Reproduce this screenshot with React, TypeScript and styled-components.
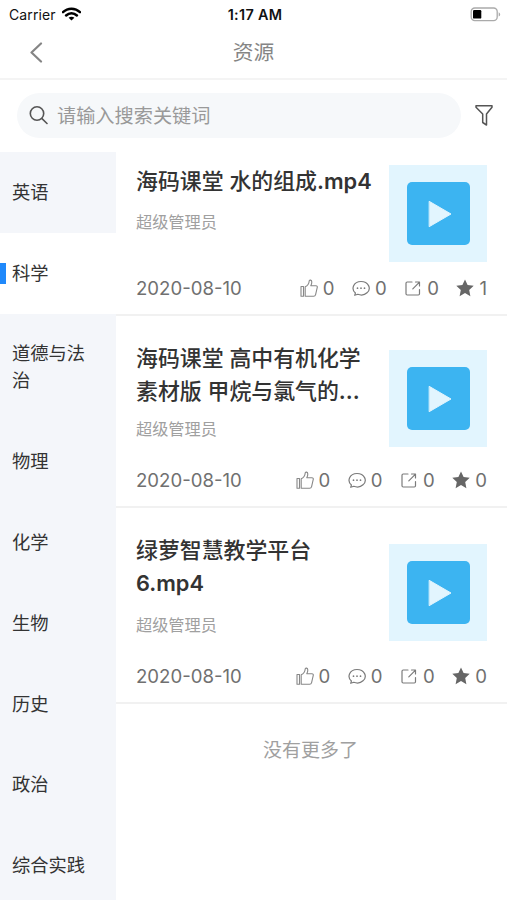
import React from 'react';
import styled, { createGlobalStyle } from 'styled-components';

const GlobalStyle = createGlobalStyle`
  * { box-sizing: border-box; }
  body {
    margin: 0;
    background: #fff;
    font-family: Inter, "Noto Sans CJK SC", sans-serif;
    color: #333;
  }
`;

const Screen = styled.div`
  width: 507px;
  height: 900px;
  display: flex;
  flex-direction: column;
  overflow: hidden;
  background: #fff;
`;

const StatusBar = styled.div`
  height: 27px;
  flex: none;
  display: grid;
  grid-template-columns: 1fr auto 1fr;
  align-items: center;
  padding: 0 6px 0 9px;
  font-size: 14px;
  line-height: 27px;
  color: #111;
`;

const Carrier = styled.div`
  display: flex;
  align-items: center;
  gap: 6px;
  letter-spacing: 0.1px;
`;

const Clock = styled.div`
  font-weight: 600;
  font-size: 14.4px;
  letter-spacing: 0.3px;
  padding-top: 1px;
`;

const BatterySlot = styled.div`
  display: flex;
  justify-content: flex-end;
`;

const NavBar = styled.header`
  height: 53px;
  flex: none;
  display: grid;
  grid-template-columns: 60px 1fr 60px;
  align-items: center;
  border-bottom: 2px solid #f4f4f4;
`;

const BackButton = styled.div`
  display: flex;
  padding-left: 29px;
`;

const PageTitle = styled.div`
  text-align: center;
  font-size: 20.7px;
  line-height: 30px;
  padding-top: 1px;
  color: #858585;
`;

const SearchRow = styled.div`
  height: 72px;
  flex: none;
  display: flex;
  align-items: center;
  padding: 0 14px 2px 17px;
  gap: 14px;
`;

const SearchField = styled.div`
  width: 444px;
  height: 45px;
  border-radius: 23px;
  background: #f6f8fa;
  display: flex;
  align-items: center;
  gap: 9px;
  padding-left: 12px;
  font-size: 19.2px;
  color: #999;
`;

const Body = styled.div`
  flex: 1;
  min-height: 0;
  display: flex;
`;

const Sidebar = styled.nav`
  width: 116px;
  flex: none;
  background: #f4f6fa;
`;

const Subject = styled.div<{ $active?: boolean }>`
  display: flex;
  align-items: center;
  padding: 26.9px 0;
  background: ${(p) => (p.$active ? '#fff' : 'transparent')};
  font-size: 18.3px;
  line-height: 27px;
`;

const Marker = styled.span<{ $active?: boolean }>`
  width: 6px;
  height: 21px;
  margin-right: 6px;
  flex: none;
  background: ${(p) => (p.$active ? '#2089fb' : 'transparent')};
`;

const SubjectName = styled.span`
  width: 76px;
`;

const List = styled.main`
  flex: 1;
  min-width: 0;
`;

const Card = styled.article<{ $height: number }>`
  height: ${(p) => p.$height}px;
  display: flex;
  flex-direction: column;
  justify-content: space-between;
  padding: 0 20px 12px;
  border-bottom: 2px solid #f1f1f1;
`;

const CardTop = styled.div`
  display: flex;
  justify-content: space-between;
`;

const CardText = styled.div<{ $top: number }>`
  padding-top: ${(p) => p.$top}px;
`;

const CardTitle = styled.h2`
  margin: 0;
  font-size: 21.9px;
  line-height: 33px;
  font-weight: 500;
  white-space: nowrap;
`;

const Latin = styled.span`
  font-weight: 600;
  font-size: 21.8px;
`;

const Author = styled.div<{ $gap: number }>`
  margin-top: ${(p) => p.$gap}px;
  font-size: 16.2px;
  line-height: 24px;
  color: #a0a0a0;
`;

const Thumb = styled.div<{ $top: number }>`
  width: 98px;
  height: 97px;
  flex: none;
  margin-top: ${(p) => p.$top}px;
  background: #e2f5fe;
  display: flex;
  align-items: center;
  justify-content: center;
`;

const ThumbTile = styled.div`
  width: 63px;
  height: 63px;
  border-radius: 5px;
  background: #3cb4f1;
  display: flex;
  align-items: center;
  justify-content: center;
  padding-left: 4px;
`;

const Meta = styled.div`
  display: flex;
  justify-content: space-between;
  align-items: center;
  height: 28px;
  font-size: 18.6px;
  color: #707070;
`;

const PostedOn = styled.span`
  font-size: 18.6px;
`;

const Stats = styled.div`
  display: flex;
  gap: 17.5px;
`;

const Stat = styled.span`
  display: flex;
  align-items: center;
  gap: 5px;
`;

const EndNote = styled.div`
  margin-top: 32px;
  padding-right: 2px;
  text-align: center;
  font-size: 19px;
  line-height: 30px;
  color: #a0a0a0;
`;

const Svg = styled.svg`
  display: block;
  flex: none;
  fill: none;
  stroke-linecap: round;
  stroke-linejoin: round;
`;

const WifiIcon = () => (
  <Svg width="19" height="14" viewBox="0 0 19 14">
    <path
      d="M1 5.2C5.8.5 13.2.5 18 5.2M4.1 8.5c3.1-3 7.7-3 10.8 0"
      stroke="#000"
      strokeWidth="2.5"
    />
    <path d="M9.5 13.6 6.6 10.8c1.600-1.500 4.200-1.500 5.800 0Z" fill="#000" />
  </Svg>
);

const BatteryIcon = () => (
  <Svg width="31" height="15" viewBox="0 0 31 15">
    <rect x="1.2" y="1" width="26" height="12.6" rx="3.6" stroke="#aaa" strokeWidth="1.3" />
    <rect x="3" y="3" width="8.3" height="8.6" rx="1.2" fill="#000" />
    <path d="M28.7 5.2c2 .8 2 3.6 0 4.4Z" fill="#aaa" />
  </Svg>
);

const BackIcon = () => (
  <Svg width="14" height="22" viewBox="0 0 14 22" stroke="#858585" strokeWidth="2.2">
    <path d="M12 1.500 2.500 10.500 12 19.500" />
  </Svg>
);

const SearchIcon = () => (
  <Svg width="19" height="20" viewBox="0 0 19 20" stroke="#555" strokeWidth="1.6">
    <circle cx="8" cy="8.500" r="6.700" />
    <path d="m13 13.700 5 4.800" />
  </Svg>
);

const FilterIcon = () => (
  <Svg width="18" height="22" viewBox="0 0 18 22" stroke="#555" strokeWidth="1.5">
    <path d="M1 1.800h16v1.400l-5.500 6.800v11L7.700 18.500V10L1 3.200Z" />
  </Svg>
);

const LikeIcon = () => (
  <Svg width="18" height="19" viewBox="0 0 18 19" stroke="#888" strokeWidth="1.1">
    <path d="M1 7.500h2.500v9.800H1ZM5.200 7.700c2.600-1 3.800-3 4-5.700.2-1.500 2.600-1.100 2.600 1 0 1.500-.4 2.500-1 3.700h5c1.400 0 1.700.8 1.400 2l-1.600 7c-.3 1.200-.9 1.600-2 1.600H5.200Z" />
  </Svg>
);

const CommentIcon = () => (
  <Svg width="18" height="17" viewBox="0 0 18 17" stroke="#7b7b7b" strokeWidth="1.2">
    <path d="M3.400 13C-1.300 9 1.500 1.500 9 1.500s10.700 7.200 6 11.300c-2.300 2.200-6 2.700-9.200 1.500l-3.100 1Z" />
    <path d="M5.500 8.200h.01M9 8.200h.01M12.500 8.200h.01" strokeWidth="1.700" />
  </Svg>
);

const ShareIcon = () => (
  <Svg width="18" height="17" viewBox="0 0 18 17" stroke="#7b7b7b" strokeWidth="1.2">
    <path d="M8 2H3.200Q2 2 2 3.200v10.600Q2 15 3.200 15h11.100Q15.500 15 15.500 13.800V9.500M8.800 8.800 15 2.600M11.500 2h4v4" />
  </Svg>
);

const StarIcon = () => (
  <Svg width="18" height="18" viewBox="0 0 18 18">
    <path d="m9 .5 2.600 5.500 6.100.8-4.500 4.200 1.200 6.200L9 14.100l-5.400 3.100 1.200-6.200L.3 6.800 6.400 6Z" fill="#666" />
  </Svg>
);

const PlayIcon = () => (
  <Svg width="24" height="28" viewBox="0 0 24 28">
    <path d="M1.500 1.500 23 14 1.500 26.500Z" fill="#e2f5fe" stroke="#e2f5fe" />
  </Svg>
);

const subjects = ['英语', '科学', '道德与法治', '物理', '化学', '生物', '历史', '政治', '综合实践'];

interface Resource {
  title: React.ReactNode;
  stars: number;
  height: number;
  textTop: number;
  thumbTop: number;
  authorGap: number;
}

const resources: Resource[] = [
  {
    title: <>海码课堂 水的组成<Latin>.mp4</Latin></>,
    stars: 1, height: 164, textTop: 13, thumbTop: 13, authorGap: 12,
  },
  {
    title: <>海码课堂 高中有机化学<br />素材版 甲烷与氯气的<Latin>...</Latin></>,
    stars: 0, height: 192, textTop: 26, thumbTop: 34, authorGap: 9,
  },
  {
    title: <>绿萝智慧教学平台<br /><Latin>6.mp4</Latin></>,
    stars: 0, height: 196, textTop: 26, thumbTop: 36, authorGap: 13,
  },
];

const ResourceCard = ({ item }: { item: Resource }) => (
  <Card $height={item.height}>
    <CardTop>
      <CardText $top={item.textTop}>
        <CardTitle>{item.title}</CardTitle>
        <Author $gap={item.authorGap}>超级管理员</Author>
      </CardText>
      <Thumb $top={item.thumbTop}>
        <ThumbTile><PlayIcon /></ThumbTile>
      </Thumb>
    </CardTop>
    <Meta>
      <PostedOn>2020-08-10</PostedOn>
      <Stats>
        <Stat><LikeIcon />0</Stat>
        <Stat><CommentIcon />0</Stat>
        <Stat><ShareIcon />0</Stat>
        <Stat><StarIcon />{item.stars}</Stat>
      </Stats>
    </Meta>
  </Card>
);

export default function App() {
  return (
    <>
      <GlobalStyle />
      <Screen>
        <StatusBar>
          <Carrier>Carrier <WifiIcon /></Carrier>
          <Clock>1:17 AM</Clock>
          <BatterySlot><BatteryIcon /></BatterySlot>
        </StatusBar>
        <NavBar>
          <BackButton><BackIcon /></BackButton>
          <PageTitle>资源</PageTitle>
        </NavBar>
        <SearchRow>
          <SearchField><SearchIcon />请输入搜索关键词</SearchField>
          <FilterIcon />
        </SearchRow>
        <Body>
          <Sidebar>
            {subjects.map((name, i) => (
              <Subject key={name} $active={i === 1}>
                <Marker $active={i === 1} />
                <SubjectName>{name}</SubjectName>
              </Subject>
            ))}
          </Sidebar>
          <List>
            {resources.map((item, i) => <ResourceCard key={i} item={item} />)}
            <EndNote>没有更多了</EndNote>
          </List>
        </Body>
      </Screen>
    </>
  );
}
